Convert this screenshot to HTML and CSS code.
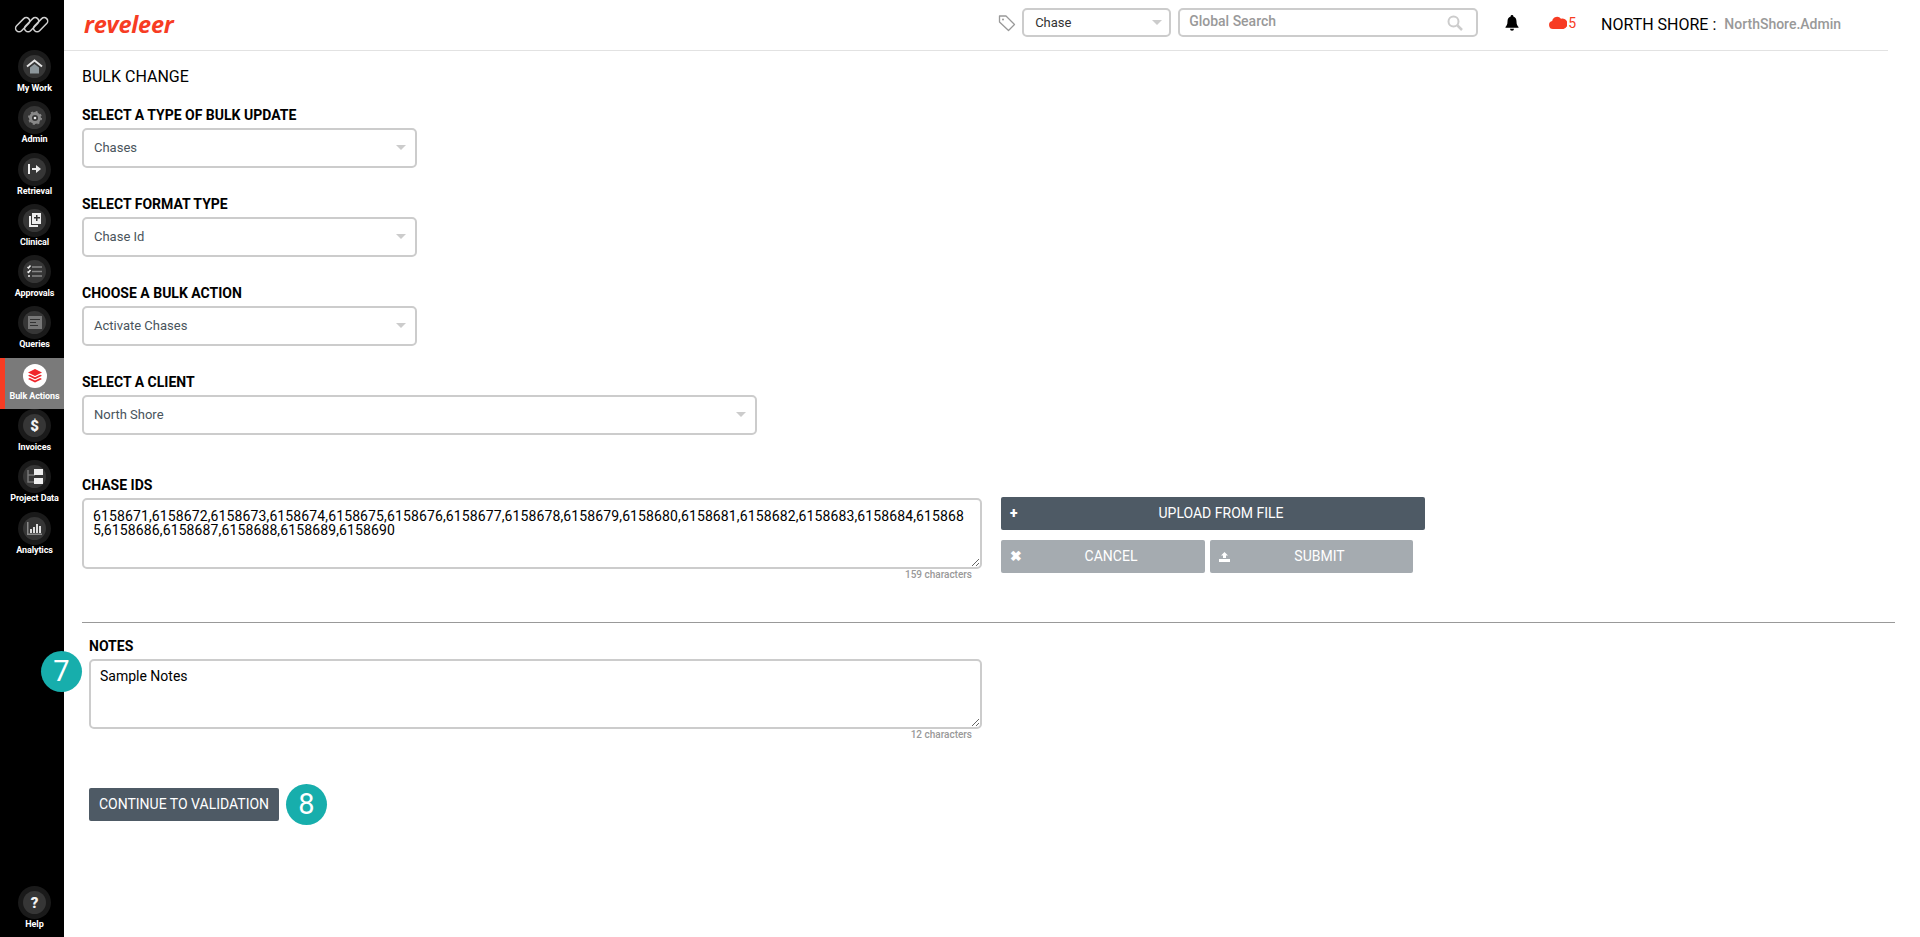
FILE: index.html
```html
<!DOCTYPE html>
<html lang="en">
<head>
<meta charset="utf-8">
<title>Bulk Change</title>
<link rel="stylesheet" href="styles.css">
</head>
<body>
<div class="app">
  <nav class="sidebar">
    <div class="logo">
      <svg width="36" height="18" viewBox="0 0 36 18" fill="none" stroke="#d0d0d0" stroke-width="1.5"><rect x="0.500" y="5" width="17" height="7" rx="3.500" transform="rotate(-45 9 9)"/><rect x="9.500" y="5" width="17" height="7" rx="3.500" transform="rotate(-45 18 9)"/><rect x="18.500" y="5" width="17" height="7" rx="3.500" transform="rotate(-45 27 9)"/></svg>
    </div>
    <a class="nav-item"><span class="nav-ring"><span class="nav-disc"><svg width="17" height="15" viewBox="0 0 17 15"><path d="M4 8.500L8.500 5 13 8.500V14.500H4z" fill="#8d979c"/><path d="M1 7.500L8.500 1.500 16 7.500" fill="none" stroke="#e4e4e4" stroke-width="2"/></svg></span></span><span class="nav-label">My Work</span></a>
    <a class="nav-item"><span class="nav-ring"><span class="nav-disc"><svg width="14" height="14" viewBox="0 0 14 14"><circle cx="7" cy="7" r="4.500" fill="none" stroke="#888" stroke-width="3"/><circle cx="7" cy="7" r="6" fill="none" stroke="#888" stroke-width="2" stroke-dasharray="2 2.700"/><circle cx="7" cy="7" r="1.300" fill="#eee"/></svg></span></span><span class="nav-label">Admin</span></a>
    <a class="nav-item"><span class="nav-ring"><span class="nav-disc"><svg width="14" height="12" viewBox="0 0 14 12" fill="#eee"><path d="M0 1h2v10H0z"/><path d="M4 5h4V2l5 4-5 4V7H4z"/></svg></span></span><span class="nav-label">Retrieval</span></a>
    <a class="nav-item"><span class="nav-ring"><span class="nav-disc"><svg width="14" height="16" viewBox="0 0 14 16" fill="#eee"><path d="M1 4h2v9h7v2H1z"/><path d="M4 1h9v11H4z"/><path d="M8 3h1.500v2H12v1.500H9.500V9H8V6.500H6V5h2z" fill="#333"/></svg></span></span><span class="nav-label">Clinical</span></a>
    <a class="nav-item"><span class="nav-ring"><span class="nav-disc"><svg width="15" height="13" viewBox="0 0 15 13" fill="none" stroke="#888" stroke-width="1.500"><path d="M5 2h10M5 6.500h10M5 11h10"/><path d="M.5 2l1 1 2-2.500M.5 6.500l1 1 2-2.500" stroke="#eee"/><circle cx="2" cy="11" r="1" fill="#eee" stroke="none"/></svg></span></span><span class="nav-label">Approvals</span></a>
    <a class="nav-item"><span class="nav-ring"><span class="nav-disc"><svg width="14" height="13" viewBox="0 0 14 13"><path d="M0 0h14v13H0z" fill="#777"/><path d="M2 3h10v1H2zM2 6h6v1H2zM2 9h8v1H2z" fill="#333"/></svg></span></span><span class="nav-label">Queries</span></a>
    <a class="nav-item is-active"><span class="nav-ring"><span class="nav-disc"><svg width="14" height="14" viewBox="0 0 14 14" fill="#f0262c"><path d="M7 0l7 3.500-7 3.500-7-3.500z"/><path d="M1.800 5.700L7 8.300l5.200-2.600L14 6.800 7 10.300 0 6.800z"/><path d="M1.800 9L7 11.600 12.200 9 14 10.100 7 13.600 0 10.100z"/></svg></span></span><span class="nav-label">Bulk Actions</span></a>
    <a class="nav-item"><span class="nav-ring"><span class="nav-disc nav-glyph">$</span></span><span class="nav-label">Invoices</span></a>
    <a class="nav-item"><span class="nav-ring"><span class="nav-disc"><svg width="16" height="15" viewBox="0 0 16 15" fill="none"><path d="M1 1v12h7M1 6h7" stroke="#777" stroke-width="1.500"/><path d="M7 0h9v6H7zM7 9h9v6H7z" fill="#eee"/></svg></span></span><span class="nav-label">Project Data</span></a>
    <a class="nav-item"><span class="nav-ring"><span class="nav-disc"><svg width="15" height="13" viewBox="0 0 15 13"><path d="M0 0h1.500v11.500H15V13H0z" fill="#888"/><path d="M3 7h2v4H3zM6 5h2v6H6zM9 2h2v9H9zM12 4h2v7h-2z" fill="#ddd"/></svg></span></span><span class="nav-label">Analytics</span></a>
    <a class="nav-item nav-help"><span class="nav-ring"><span class="nav-disc nav-glyph">?</span></span><span class="nav-label">Help</span></a>
  </nav>

  <div class="content">
    <header class="topbar">
      <div class="brand">reveleer</div>
      <div class="top-tools">
        <svg class="tag-icon" width="18" height="18" viewBox="0 0 18 18" fill="none" stroke="#999" stroke-width="1.300" stroke-linejoin="round"><path d="M1.500 2h6.500l8.500 8.500-6 6L1.500 8z"/><circle cx="5" cy="5.500" r="1" fill="#999" stroke="none"/></svg>
        <div class="select select-top"><span class="select-dark">Chase</span><i class="caret"></i></div>
        <div class="search"><span>Global Search</span><svg width="16" height="16" viewBox="0 0 16 16" fill="none" stroke="#ccc" stroke-width="2"><circle cx="6.500" cy="6.500" r="5"/><path d="M10.500 10.500L15 15" stroke-width="2.500"/></svg></div>
        <svg class="bell" width="14" height="16" viewBox="0 0 14 16" fill="#000"><path d="M7 0a1.300 1.300 0 0 1 1.300 1.500C10.500 2 11.500 4 11.500 6.500c0 3 .8 4 2 5.500v.8H.5V12c1.200-1.500 2-2.500 2-5.500C2.500 4 3.500 2 5.700 1.500A1.300 1.300 0 0 1 7 0z"/><path d="M5 13.800h4a2 2 0 0 1-4 0z"/></svg>
        <div class="alert"><svg width="18" height="13" viewBox="0 0 18 13" fill="#f73c23"><path d="M4 13a4 4 0 0 1-.8-7.900A5 5 0 0 1 12 2.700 4 4 0 0 1 14.500 13z"/></svg><span>5</span></div>
        <div class="account"><span class="org">NORTH SHORE :</span><span class="user">NorthShore.Admin</span></div>
      </div>
    </header>

    <main class="page">
      <h1 class="title">BULK CHANGE</h1>
      <div class="field"><label class="label">SELECT A TYPE OF BULK UPDATE</label><div class="select"><span>Chases</span><i class="caret"></i></div></div>
      <div class="field"><label class="label">SELECT FORMAT TYPE</label><div class="select"><span>Chase Id</span><i class="caret"></i></div></div>
      <div class="field"><label class="label">CHOOSE A BULK ACTION</label><div class="select"><span>Activate Chases</span><i class="caret"></i></div></div>
      <div class="field"><label class="label">SELECT A CLIENT</label><div class="select select-wide"><span>North Shore</span><i class="caret"></i></div></div>

      <div class="ids-row">
        <div class="text-field">
          <label class="label">CHASE IDS</label>
          <textarea class="area area-ids" readonly>6158671,6158672,6158673,6158674,6158675,6158676,6158677,6158678,6158679,6158680,6158681,6158682,6158683,6158684,6158685,6158686,6158687,6158688,6158689,6158690</textarea>
          <div class="count">159 characters</div>
        </div>
        <div class="actions">
          <button class="btn btn-dark btn-upload"><span class="btn-icon">+</span>UPLOAD FROM FILE</button>
          <div class="action-pair">
            <button class="btn btn-muted btn-cancel"><span class="btn-icon">✖</span>CANCEL</button>
            <button class="btn btn-muted btn-submit"><svg class="btn-svg" width="11" height="10" viewBox="0 0 11 10" fill="#fff"><path d="M5.500 0L9 3.500H7V6H4V3.500H2z"/><path d="M0 7h11v3H0z"/></svg>SUBMIT</button>
          </div>
        </div>
      </div>

      <hr class="rule">

      <div class="notes">
        <span class="marker marker-7">7</span>
        <div class="text-field text-field-notes">
          <label class="label">NOTES</label>
          <textarea class="area area-notes" readonly>Sample Notes</textarea>
          <div class="count">12 characters</div>
        </div>
      </div>

      <div class="continue-row">
        <button class="btn btn-dark btn-continue">CONTINUE TO VALIDATION</button>
        <span class="marker">8</span>
      </div>
    </main>
  </div>
</div>
</body>
</html>
```

FILE: styles.css
```css
* { box-sizing: border-box; }
html, body { margin: 0; height: 100%; }
body { font-family: Roboto, "Liberation Sans", sans-serif; background: #fff; color: #000; overflow: hidden; }
.app { display: flex; height: 937px; }

.sidebar { width: 64px; flex: none; background: #000; display: flex; flex-direction: column; align-items: stretch; }
.logo { height: 50px; padding-top: 16px; display: flex; justify-content: center; align-items: flex-start; }
.nav-item { height: 51.300px; padding-left: 5px; display: flex; flex-direction: column; align-items: center; color: #fff; }
.nav-ring { width: 33px; height: 33px; border-radius: 50%; background: #1a1a1a; display: flex; align-items: center; justify-content: center; flex: none; }
.nav-disc { width: 23px; height: 23px; border-radius: 50%; background: #363636; display: flex; align-items: center; justify-content: center; }
.nav-label { font-size: 9px; font-weight: 700; line-height: 11px; white-space: nowrap; letter-spacing: -0.100px; }
.nav-glyph { color: #f2f2f2; font-weight: 900; font-size: 15px; }
.nav-item.is-active { background: #7a7a7a; border-left: 5px solid #f73c23; padding-left: 0; justify-content: flex-end; padding-bottom: 7px; }
.is-active .nav-ring { background: transparent; width: 26px; height: 26px; }
.is-active .nav-disc { background: #fff; width: 24px; height: 24px; }
.is-active .nav-label { margin-top: 2px; }
.nav-help { margin-top: auto; height: 51px; }

.content { flex: 1; min-width: 0; display: flex; flex-direction: column; }
.topbar { height: 51px; margin-right: 32px; border-bottom: 1px solid #e2e2e2; display: flex; align-items: flex-start; justify-content: space-between; padding: 8px 0 0 20px; flex: none; }
.brand { font-family: "Open Sans", sans-serif; font-style: italic; font-weight: 700; font-size: 23.500px; letter-spacing: -0.200px; color: #f73c23; line-height: 1; margin-top: 5px; }
.top-tools { display: flex; align-items: center; padding-right: 47px; }
.tag-icon { margin-right: 6px; }
.select { width: 335px; height: 40px; border: 2px solid #ccc; border-radius: 5px; display: flex; align-items: center; justify-content: space-between; padding: 0 9px 2px 10px; font-size: 13px; color: #49545c; }
.select-wide { width: 675px; }
.select-top { width: 149px; height: 29px; padding: 0 7px 0 11px; font-size: 13px; color: #333; }
.select-dark { color: #333; }
.caret { width: 0; height: 0; border-left: 5px solid transparent; border-right: 5px solid transparent; border-top: 5px solid #ccc; }
.search { width: 300px; height: 29px; margin-left: 7px; border: 2px solid #ccc; border-radius: 5px; display: flex; align-items: center; justify-content: space-between; padding: 0 13px 3px 9px; font-size: 14px; font-weight: 500; color: #999; }
.search svg { margin-top: 3px; }
.bell { margin-left: 27px; }
.alert { margin-left: 30px; display: flex; align-items: center; color: #f73c23; font-size: 14px; }
.alert svg { margin-right: 1px; }
.account { margin-left: 25px; display: flex; align-items: center; width: 240px; padding-top: 3px; }
.org { font-size: 16px; white-space: nowrap; }
.user { font-size: 14px; font-weight: 500; color: #999; margin-left: 8px; white-space: nowrap; }

.page { flex: 1; padding: 0 25px 0 18px; display: flex; flex-direction: column; align-items: flex-start; }
.title { font-size: 16px; font-weight: 400; line-height: 20px; margin: 16px 0 0; }
.label { display: block; font-size: 14px; font-weight: 700; line-height: 16px; }
.field { margin-top: 10px; height: 79px; }
.field .select { margin-top: 5px; }
.title + .field { margin-top: 20px; }

.ids-row { margin-top: 24px; display: flex; align-items: flex-start; }
.text-field { width: 900px; position: relative; }
.text-field-notes { width: 893px; }
.area { display: block; width: 100%; height: 71px; margin-top: 5px; border: 2px solid #ccc; border-radius: 5px; padding: 9px 11px 6px 9px; font: 400 14px/14px Roboto, sans-serif; color: #000; outline: none; word-break: break-all; }
.area-ids { letter-spacing: 0.120px; }
.area-notes { height: 70px; padding-top: 8px; }
.count { font-size: 10px; font-weight: 500; line-height: 11px; color: #999; text-align: right; padding-right: 10px; }
.actions { margin: 20px 0 0 19px; }
.btn { border: 0; border-radius: 2px; color: #fff; font: 400 14px/33px Roboto, sans-serif; height: 33px; padding: 0; position: relative; display: block; text-align: center; }
.btn-dark { background: #4e5a65; }
.btn-muted { background: #a5abb0; }
.btn-upload { width: 424px; padding-left: 16px; }
.action-pair { display: flex; gap: 5px; margin-top: 10px; }
.btn-cancel { width: 204px; padding-left: 16px; }
.btn-submit { width: 203px; padding-left: 16px; }
.btn-icon { position: absolute; left: 9px; top: 0; font-size: 14px; font-weight: 900; }
.btn-svg { position: absolute; left: 9px; top: 12px; }

.rule { width: 1813px; margin: 42px 0 0; border: 0; border-top: 1px solid #999; }
.notes { margin: 15px 0 0 7px; position: relative; }
.marker { width: 41px; height: 41px; border-radius: 50%; background: #17aeac; color: #fff; font-size: 29px; line-height: 41px; text-align: center; flex: none; }
.marker-7 { position: absolute; left: -48px; top: 13px; z-index: 2; }
.continue-row { margin: 44px 0 0 7px; display: flex; align-items: center; gap: 7px; }
.btn-continue { width: 190px; padding: 0; }
```
